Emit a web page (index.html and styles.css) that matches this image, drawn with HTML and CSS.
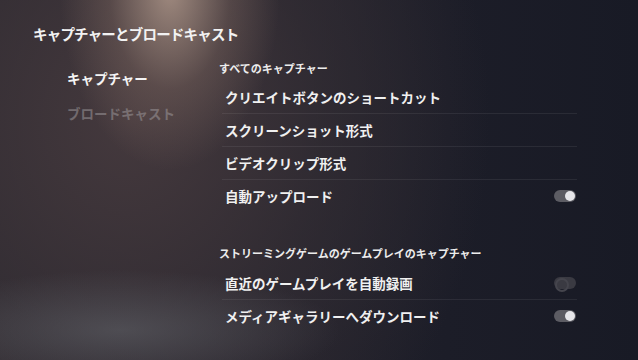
FILE: index.html
```html
<!DOCTYPE html>
<html lang="ja">
<head>
    <meta charset="UTF-8">
    <meta name="viewport" content="width=device-width, initial-scale=1.0">
    <title>キャプチャーとブロードキャスト</title>
    <link rel="stylesheet" href="styles.css">
</head>
<body>

<div class="screen">
    <h1 class="title">キャプチャーとブロードキャスト</h1>

    <div class="main">
        <!-- Left menu -->
        <ul class="nav">
            <li class="nav-item active">キャプチャー</li>
            <li class="nav-item">ブロードキャスト</li>
        </ul>

        <!-- Settings list -->
        <div class="content">
            <div class="group">
                <h2 class="group-title">すべてのキャプチャー</h2>
                <div class="row">クリエイトボタンのショートカット</div>
                <div class="row">スクリーンショット形式</div>
                <div class="row">ビデオクリップ形式</div>
                <div class="row">自動アップロード <span class="toggle on"></span></div>
            </div>

            <div class="group second">
                <h2 class="group-title">ストリーミングゲームのゲームプレイのキャプチャー</h2>
                <div class="row">直近のゲームプレイを自動録画 <span class="toggle"></span></div>
                <div class="row">メディアギャラリーへダウンロード <span class="toggle on"></span></div>
            </div>
        </div>
    </div>
</div>

</body>
</html>
```

FILE: styles.css
```css
* {
    margin: 0;
    padding: 0;
    box-sizing: border-box;
}
body {
    font-family: "Noto Sans CJK JP", "Noto Sans", sans-serif;
    background-color: #1b1c27;
    color: #f2f2f2;
    overflow: hidden;
}
.screen {
    width: 638px;
    height: 360px;
    padding: 24px 0 0 33px;
    background:
        radial-gradient(ellipse 110px 180px at 170px -10px, rgba(185, 160, 145, 0.8), rgba(140, 115, 105, 0.35) 55%, rgba(0, 0, 0, 0) 100%),
        radial-gradient(ellipse 220px 60px at 120px 330px, rgba(100, 102, 108, 0.55), rgba(0, 0, 0, 0) 100%),
        radial-gradient(ellipse 360px 420px at 130px 120px, rgba(70, 58, 62, 0.95), rgba(55, 48, 54, 0.6) 55%, rgba(0, 0, 0, 0) 100%),
        linear-gradient(90deg, #2f2b31 0%, #25232c 40%, #1c1d28 70%, #181a25 100%);
}
.title {
    font-size: 14.5px;
    font-weight: 700;
    line-height: 20px;
    letter-spacing: -0.8px;
}
.main {
    display: flex;
    margin-top: 16px;
}
.nav {
    list-style: none;
    width: 186px;
    padding-left: 34px;
    padding-top: 8px;
}
.nav-item {
    font-size: 13.5px;
    font-weight: 700;
    line-height: 20px;
    margin-bottom: 15px;
    color: #9a9598;
    opacity: 0.55;
}
.nav-item.active {
    color: #f4f4f4;
    opacity: 1;
}
.content {
    width: 358px;
}
.group-title {
    font-size: 11px;
    font-weight: 700;
    line-height: 16px;
    color: #ececec;
    margin-bottom: 5px;
}
.row {
    display: flex;
    align-items: center;
    justify-content: space-between;
    height: 33px;
    padding: 0 0 1px 3px;
    margin-left: 3px;
    font-size: 13.5px;
    font-weight: 700;
    color: #f0f0f0;
    border-bottom: 1px solid rgba(255, 255, 255, 0.07);
}
.row:last-child {
    border-bottom: none;
}
.second {
    margin-top: 32px;
}
.second .group-title {
    margin-bottom: 6px;
}
.toggle {
    position: relative;
    width: 22px;
    height: 12px;
    margin-right: 1px;
    border-radius: 6px;
    background-color: #3a3a42;
}
.toggle::after {
    content: "";
    position: absolute;
    top: 1px;
    left: 1px;
    width: 10px;
    height: 10px;
    border-radius: 50%;
    border: 2px solid #45454d;
}
.toggle.on {
    background-color: #5c5c63;
}
.toggle.on::after {
    left: 11px;
    border: none;
    background-color: #e6e6ea;
}
```
